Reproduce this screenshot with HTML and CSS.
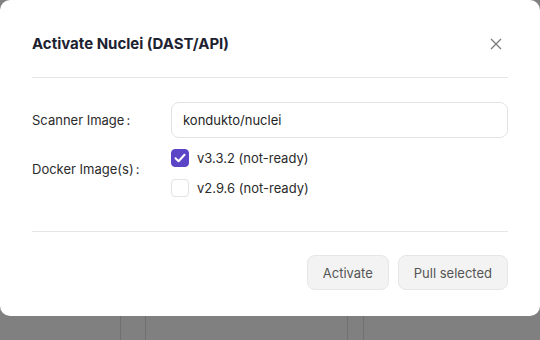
FILE: index.html
```html
<!DOCTYPE html>
<html lang="en">
  <head>
    <meta charset="UTF-8" />
    <meta name="viewport" content="width=device-width, initial-scale=1.0" />
    <title>Activate Nuclei</title>
    <link rel="stylesheet" href="styles.css">
  </head>
  <body>
    <div class="backdrop">
      <div class="bg-lines">
        <span class="bg-line l1"></span>
        <span class="bg-line l2"></span>
        <span class="bg-line l3"></span>
        <span class="bg-line l4"></span>
      </div>
      <div class="modal">
        <div class="modal-header">
          <h2>Activate Nuclei (DAST/API)</h2>
          <button class="close" aria-label="Close">
            <svg width="12" height="12" viewBox="0 0 12 12">
              <path d="M1 1L11 11M11 1L1 11" stroke="#7a7a7a" stroke-width="1.3" fill="none" />
            </svg>
          </button>
        </div>
        <div class="modal-body">
          <div class="form-row">
            <label class="form-label" for="scanner">Scanner Image</label>
            <input type="text" id="scanner" class="form-input" value="kondukto/nuclei" />
          </div>
          <div class="form-row top">
            <span class="form-label">Docker Image(s)</span>
            <div class="check-list">
              <label class="check">
                <span class="box checked">
                  <svg width="12" height="10" viewBox="0 0 12 10">
                    <path d="M1.5 5.2L4.6 8.2L10.5 1.8" stroke="#fff" stroke-width="2" fill="none" stroke-linecap="round" stroke-linejoin="round" />
                  </svg>
                </span>
                v3.3.2 (not-ready)
              </label>
              <label class="check">
                <span class="box"></span>
                v2.9.6 (not-ready)
              </label>
            </div>
          </div>
        </div>
        <div class="modal-footer">
          <button class="btn">Activate</button>
          <button class="btn">Pull selected</button>
        </div>
      </div>
    </div>
  </body>
</html>
```

FILE: styles.css
```css
* {
  margin: 0;
  padding: 0;
  box-sizing: border-box;
}
body {
  font-family: Inter, "Noto Sans", sans-serif;
  background-color: #808080;
  width: 540px;
  height: 340px;
  overflow: hidden;
}
.backdrop {
  position: relative;
  height: 340px;
}
.bg-line {
  position: absolute;
  top: 0;
  bottom: 0;
  width: 1px;
  background-color: #707070;
}
.l1 { left: 120px; }
.l2 { left: 145px; }
.l3 { left: 347px; }
.l4 { left: 363px; }
.modal {
  position: relative;
  width: 540px;
  height: 316px;
  background-color: #fff;
  border-radius: 10px;
  padding: 0 32px;
}
.modal-header {
  display: flex;
  align-items: center;
  justify-content: space-between;
  height: 78px;
  padding-top: 10px;
  border-bottom: 1px solid #e6e6e6;
}
.modal-header h2 {
  font-size: 15px;
  font-weight: 700;
  color: #1d2230;
}
.close {
  border: none;
  background: none;
  width: 24px;
  height: 24px;
  display: flex;
  align-items: center;
  justify-content: center;
}
.modal-body {
  padding: 24px 0 34px;
  border-bottom: 1px solid #e6e6e6;
  display: flex;
  flex-direction: column;
  gap: 10px;
}
.form-row {
  display: flex;
  align-items: center;
}
.form-row.top {
  align-items: flex-start;
}
.form-label {
  width: 139px;
  font-size: 13px;
  color: #2b2b2b;
}
.form-row.top .form-label {
  padding-top: 13px;
}
.form-label::after {
  content: ":";
  margin-left: 2px;
}
.form-input {
  flex: 1;
  height: 36px;
  border: 1px solid #e3e3e3;
  border-radius: 8px;
  padding: 0 11px;
  font-family: inherit;
  font-size: 13px;
  color: #1f1f1f;
}
.check-list {
  display: flex;
  flex-direction: column;
  gap: 12px;
  padding-top: 1px;
}
.check {
  display: flex;
  align-items: center;
  gap: 8px;
  font-size: 13px;
  color: #2b2b2b;
}
.box {
  width: 18px;
  height: 18px;
  border: 1px solid #e3e3e3;
  border-radius: 4px;
  display: flex;
  align-items: center;
  justify-content: center;
}
.box.checked {
  background-color: #5b45c6;
  border-color: #5b45c6;
}
.modal-footer {
  display: flex;
  justify-content: flex-end;
  gap: 9px;
  padding-top: 23px;
}
.btn {
  height: 35px;
  padding: 0 15px;
  background-color: #f3f3f3;
  border: 1px solid #e6e6e6;
  border-radius: 8px;
  font-family: inherit;
  font-size: 13px;
  color: #555;
}
```
